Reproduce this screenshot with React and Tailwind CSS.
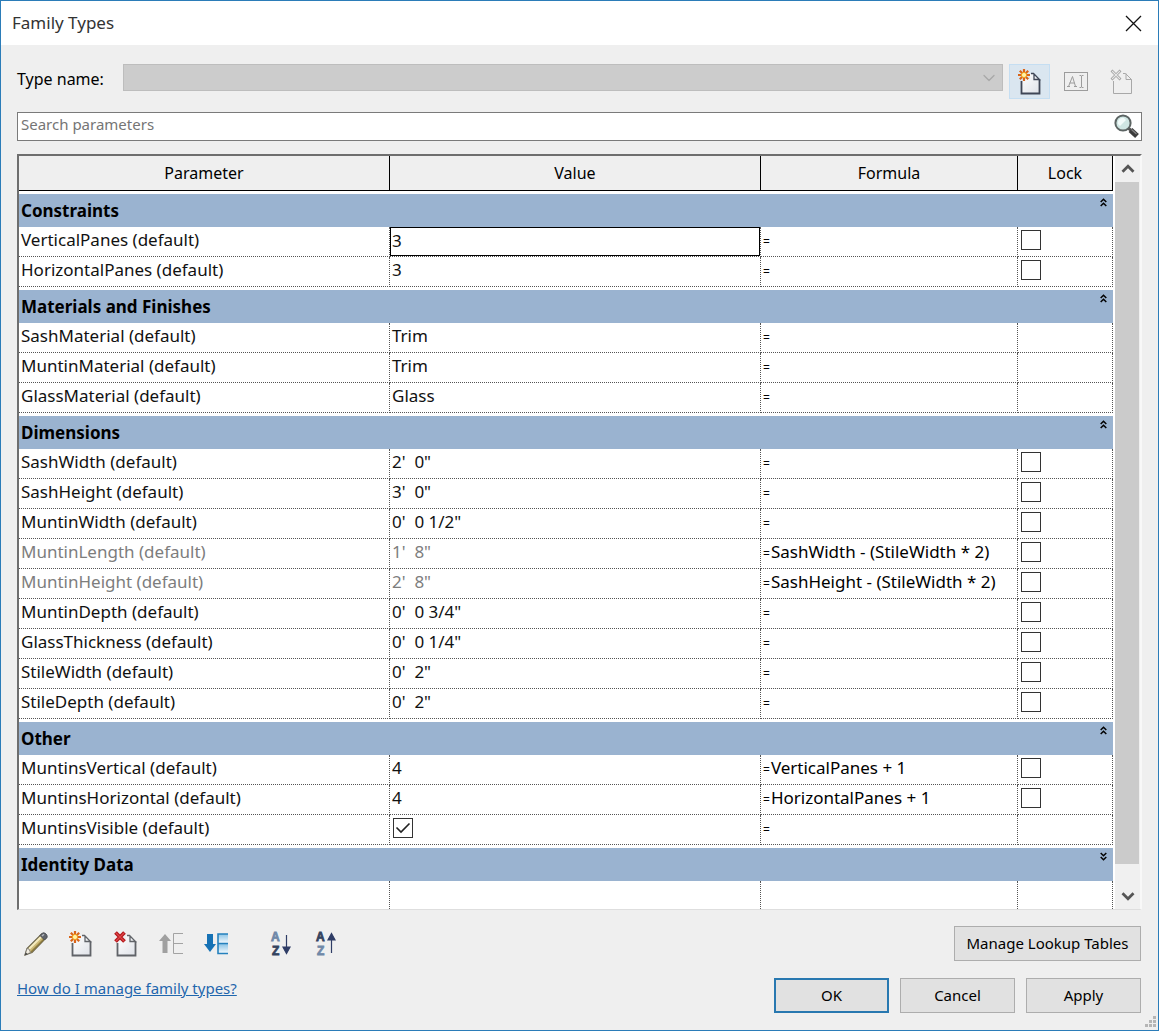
import { useState } from 'react'
import { ChevronDown, ChevronUp } from 'lucide-react'

const GROUPS = [
  {
    title: 'Constraints',
    open: true,
    rows: [
      { name: 'VerticalPanes', value: '3', lock: true, editing: true },
      { name: 'HorizontalPanes', value: '3', lock: true },
    ],
  },
  {
    title: 'Materials and Finishes',
    open: true,
    rows: [
      { name: 'SashMaterial', value: 'Trim' },
      { name: 'MuntinMaterial', value: 'Trim' },
      { name: 'GlassMaterial', value: 'Glass' },
    ],
  },
  {
    title: 'Dimensions',
    open: true,
    rows: [
      { name: 'SashWidth', value: '2\'  0"', lock: true },
      { name: 'SashHeight', value: '3\'  0"', lock: true },
      { name: 'MuntinWidth', value: '0\'  0 1/2"', lock: true },
      { name: 'MuntinLength', value: '1\'  8"', formula: 'SashWidth - (StileWidth * 2)', lock: true, derived: true },
      { name: 'MuntinHeight', value: '2\'  8"', formula: 'SashHeight - (StileWidth * 2)', lock: true, derived: true },
      { name: 'MuntinDepth', value: '0\'  0 3/4"', lock: true },
      { name: 'GlassThickness', value: '0\'  0 1/4"', lock: true },
      { name: 'StileWidth', value: '0\'  2"', lock: true },
      { name: 'StileDepth', value: '0\'  2"', lock: true },
    ],
  },
  {
    title: 'Other',
    open: true,
    rows: [
      { name: 'MuntinsVertical', value: '4', formula: 'VerticalPanes + 1', lock: true },
      { name: 'MuntinsHorizontal', value: '4', formula: 'HorizontalPanes + 1', lock: true },
      { name: 'MuntinsVisible', value: true },
    ],
  },
  { title: 'Identity Data', open: false, rows: [] },
]

const CELL = 'h-[30px] border-r border-b border-dotted border-[#555] p-0 text-[17px] leading-6'

export default function App() {
  return (
    <div className="relative flex min-h-screen flex-col border border-[#2b7cb8] bg-[#efefef] font-['Noto_Sans','Open_Sans',sans-serif] text-[15px] text-black">
      <header className="flex h-11 items-center justify-between bg-white pr-4 pl-[11px]">
        <h1 className="text-[17px] text-[#333]">Family Types</h1>
        <button type="button" aria-label="Close">
          <svg width="17" height="17" viewBox="0 0 17 17" stroke="#111" strokeWidth="1.3">
            <path d="M1 1L16 16M16 1L1 16" />
          </svg>
        </button>
      </header>

      <main className="flex flex-1 flex-col px-4 pt-[19px] pb-[17px]">
        <TypeBar />
        <div className="mt-[13px] flex h-[29px] items-center border border-[#7a7a7a] bg-white">
          <input
            type="text"
            aria-label="Search parameters"
            placeholder="Search parameters"
            className="h-full min-w-0 flex-1 pb-1.5 pl-[3px] outline-none placeholder:text-[#757575]"
          />
          <button type="button" aria-label="Search" className="mr-0.5">
            <SearchIcon />
          </button>
        </div>

        <div className="mt-[13px] flex flex-1 border-t-2 border-r-2 border-b border-l-2 border-t-[#6e6e6e] border-r-[#f8f8f8] border-b-[#dedede] border-l-[#6e6e6e] bg-white">
          <ParameterTable />
          <ScrollBar />
        </div>

        <div className="mt-4 flex items-center justify-between pr-px">
          <div className="flex items-center pl-px">
            <ToolButton label="Edit parameter"><PencilIcon /></ToolButton>
            <ToolButton label="New parameter"><PageIcon mark="new" /></ToolButton>
            <ToolButton label="Delete parameter"><PageIcon mark="delete" /></ToolButton>
            <ToolButton label="Move up" disabled><MoveIcon up /></ToolButton>
            <ToolButton label="Move down"><MoveIcon /></ToolButton>
            <div className="w-5" />
            <ToolButton label="Sort ascending"><SortIcon /></ToolButton>
            <ToolButton label="Sort descending"><SortIcon up /></ToolButton>
          </div>
          <button type="button" className="h-[35px] w-[187px] border border-[#adadad] bg-[#e1e1e1]">
            Manage Lookup Tables
          </button>
        </div>

        <div className="mt-[17px] flex items-start justify-between pr-px">
          <a href="#help" className="leading-5 text-[#1f66ad] underline">How do I manage family types?</a>
          <div className="flex gap-[11px]">
            <button type="button" className="h-[35px] w-[115px] border-2 border-[#2878b0] bg-[#e1e1e1]">OK</button>
            <button type="button" className="h-[35px] w-[115px] border border-[#adadad] bg-[#e1e1e1]">Cancel</button>
            <button type="button" className="h-[35px] w-[115px] border border-[#adadad] bg-[#e1e1e1]">Apply</button>
          </div>
        </div>
      </main>
      <ResizeGrip />
    </div>
  )
}

function TypeBar() {
  return (
    <div className="flex items-start">
      <label htmlFor="type-name" className="w-[106px] pt-[3px] text-base">Type name:</label>
      <div className="relative flex-1">
        <select id="type-name" disabled className="block h-[27px] w-full appearance-none border border-[#bdbdbd] bg-[#cccccc]" />
        <ChevronDown size={20} strokeWidth={1.5} className="pointer-events-none absolute top-1 right-1 text-[#a8a8a8]" />
      </div>
      <div className="ml-1.5 flex gap-[5px]">
        <button type="button" aria-label="New type" className="flex h-[35px] w-[41px] items-center justify-center border border-[#c5def2] bg-[#dae6f0]">
          <PageIcon mark="new" dark />
        </button>
        <button type="button" aria-label="Rename type" disabled className="flex h-[35px] w-[41px] items-center justify-center">
          <RenameIcon />
        </button>
        <button type="button" aria-label="Delete type" disabled className="flex h-[35px] w-[41px] items-center justify-center">
          <PageIcon mark="delete" disabled />
        </button>
      </div>
    </div>
  )
}

function ParameterTable() {
  return (
    <table className="w-full table-fixed border-separate border-spacing-0 self-start">
      <colgroup>
        <col />
        <col />
        <col className="w-[257px]" />
        <col className="w-[95px]" />
      </colgroup>
      <thead>
        <tr>
          {['Parameter', 'Value', 'Formula', 'Lock'].map((h) => (
            <th key={h} scope="col" className="h-[35px] border-r border-b border-black bg-[#efefef] p-0 text-base font-normal">
              {h}
            </th>
          ))}
        </tr>
      </thead>
      {GROUPS.map((g) => <Group key={g.title} group={g} />)}
      <tbody>
        <tr>
          {[0, 1, 2, 3].map((i) => (
            <td key={i} className="h-7 border-r border-dotted border-[#555] p-0" />
          ))}
        </tr>
      </tbody>
    </table>
  )
}

function Group({ group }) {
  const [open, setOpen] = useState(group.open)
  return (
    <tbody>
      <tr>
        <th colSpan={4} scope="colgroup" className="h-9 border-t-[3px] border-white bg-[#9ab3d0] p-0 text-left">
          <div className="flex h-[33px] items-center justify-between pr-1.5 pl-0.5">
            <span className="text-[17px] font-bold">{group.title}</span>
            <button type="button" aria-label={`Toggle ${group.title}`} onClick={() => setOpen(!open)} className="mt-1 self-start">
              <DoubleChevron up={open} />
            </button>
          </div>
        </th>
      </tr>
      {open && group.rows.map((r) => <Row key={r.name} row={r} />)}
    </tbody>
  )
}

function Row({ row }) {
  const tone = row.derived ? 'text-[#7d7d7d]' : 'text-[#111]'
  return (
    <tr>
      <td className={`${CELL} pb-[3px] pl-0.5 ${tone}`}>{row.name} (default)</td>
      <td className={`${CELL} ${row.editing ? '' : 'pb-[3px]'} ${tone}`}>
        {row.editing && (
          <input
            type="text"
            aria-label={row.name}
            defaultValue={row.value}
            className="block h-[29px] w-full border border-black bg-white pb-0.5 pl-px outline-none"
          />
        )}
        {row.value === true && <CheckBox label={row.name} checked />}
        {!row.editing && row.value !== true && <span className="pl-0.5 whitespace-pre">{row.value}</span>}
      </td>
      <td className={`${CELL} pb-[3px] pl-0.5`}>
        <span className="mr-px text-xs">=</span>
        {row.formula}
      </td>
      <td className={`${CELL} pb-[3px]`}>{row.lock && <CheckBox label={`Lock ${row.name}`} />}</td>
    </tr>
  )
}

function CheckBox({ label, checked = false }) {
  return (
    <span className="ml-[3px] grid size-5">
      <input
        type="checkbox"
        aria-label={label}
        defaultChecked={checked}
        className="peer col-start-1 row-start-1 size-5 appearance-none border border-[#333] bg-white"
      />
      <svg viewBox="0 0 20 20" className="pointer-events-none invisible col-start-1 row-start-1 size-5 peer-checked:visible" fill="none" stroke="#222" strokeWidth="1.6">
        <path d="M3.5 9.5l4.5 4.5 8.5-8.5" />
      </svg>
    </span>
  )
}

function ScrollBar() {
  return (
    <div className="ml-0.5 flex w-[25px] shrink-0 flex-col bg-[#f0f0f0]">
      <button type="button" aria-label="Scroll up" className="flex h-[26px] items-center justify-center text-[#555]">
        <ChevronUp size={22} strokeWidth={3} strokeLinecap="butt" strokeLinejoin="miter" />
      </button>
      <div className="mb-[19px] w-6 flex-1 bg-[#cbcbcb]" />
      <button type="button" aria-label="Scroll down" className="flex h-[26px] items-center justify-center text-[#555]">
        <ChevronDown size={22} strokeWidth={3} strokeLinecap="butt" strokeLinejoin="miter" />
      </button>
    </div>
  )
}

function ToolButton({ label, disabled, children }) {
  return (
    <button type="button" aria-label={label} disabled={disabled} className="mr-[9px] flex h-8 w-9 items-center justify-center">
      {children}
    </button>
  )
}

function DoubleChevron({ up }) {
  return (
    <svg width="7" height="9" viewBox="0 0 7 9" fill="none" stroke="#000" strokeWidth="1.5">
      <path d={up ? 'M.7 4L3.5 1.2 6.3 4M.7 8L3.5 5.2 6.3 8' : 'M.7 1L3.5 3.8 6.3 1M.7 5L3.5 7.8 6.3 5'} />
    </svg>
  )
}

function PageIcon({ mark, dark, disabled }) {
  const line = disabled ? '#a8a8a8' : dark ? '#3f4656' : '#606368'
  return (
    <svg width="24" height="26" viewBox="0 0 24 26" fill="none">
      <defs>
        <linearGradient id="page-fill" x1="0" y1="0" x2="1" y2="1">
          <stop offset="0" stopColor="#fff" />
          <stop offset="1" stopColor="#dfe2e8" />
        </linearGradient>
      </defs>
      <path d="M3.5 12V24H21.5V11L15 5H12V10H8Z" fill={disabled ? 'none' : 'url(#page-fill)'} />
      <path d="M3.5 12V24.5H21.5V10.5" stroke={line} strokeWidth={disabled ? 1 : 1.8} />
      <path d="M13 4.5H15.5L21.5 10.5H16V4.5" stroke={line} strokeWidth={disabled ? 1 : 1.3} />
      {mark === 'new' && (
        <g>
          <path d="M6 0V12M0 6H12M1.8 1.8L10.2 10.2M10.2 1.8L1.8 10.2" stroke="#d9651a" strokeWidth="2.2" />
          <circle cx="6" cy="6" r="2.6" fill="#fff3a8" stroke="#f2a01e" />
        </g>
      )}
      {mark === 'delete' && (
        <g>
          <path d="M1.5 1.5L10.5 10.5M10.5 1.5L1.5 10.5" stroke={disabled ? '#9a9a9a' : '#b3161b'} strokeWidth={disabled ? 2.6 : 3.8} />
          <path d="M2 2L10 10M10 2L2 10" stroke={disabled ? '#e6e6e6' : '#e0484a'} strokeWidth="1.2" />
        </g>
      )}
    </svg>
  )
}

function RenameIcon() {
  return (
    <svg width="24" height="20" viewBox="0 0 24 20" fill="none" stroke="#9c9c9c">
      <rect x=".5" y=".5" width="23" height="18" />
      <path d="M4.5 14.5L8.5 4.5L11.5 14.5M5.5 11H10.5M3 14.5H6M10 14.5H13" />
      <path d="M15.5 3.5H17L17.5 4L18 3.5H19.5M17.5 4V15M15.5 15.5H17L17.5 15L18 15.5H19.5" />
    </svg>
  )
}

function SearchIcon() {
  return (
    <svg width="25" height="25" viewBox="0 0 25 25">
      <path d="M14 14L18 17" stroke="#555" strokeWidth="3" />
      <path d="M16.5 16L23 22" stroke="#3c3c3c" strokeWidth="5.5" />
      <path d="M17.5 15.5L22.5 20" stroke="#858585" strokeWidth="1.2" />
      <circle cx="9" cy="9" r="7.6" fill="#cfe6e3" stroke="#5c6463" strokeWidth="2" />
      <path d="M4 10A5 5 0 0 1 10 4L12 6L6 12Z" fill="#f2fbfa" />
    </svg>
  )
}

function PencilIcon() {
  return (
    <svg width="24" height="24" viewBox="0 0 24 24">
      <path d="M1 23L3 16.5L17.5 2L22 6L8 20.5Z" fill="#cdbb78" stroke="#6b654d" strokeWidth="1.2" />
      <path d="M5 17L18 4" stroke="#f5ecc0" strokeWidth="1.8" />
      <path d="M7 20L20 7" stroke="#8f7d3e" strokeWidth="1.5" />
      <path d="M16 3.5L18.5 1Q20 .3 22 2Q23.8 4 23 5.5L20.5 8Z" fill="#60646c" stroke="#4b4e55" />
      <path d="M18 4L20 2.3" stroke="#b4b8bf" strokeWidth="1.5" />
      <path d="M1 23L3 16.5L5 17L6.5 20.5Z" fill="#f3eee2" stroke="#77756e" strokeWidth=".8" />
      <path d="M1 23L1.8 20.5L3.5 22.2Z" fill="#333" />
    </svg>
  )
}

function MoveIcon({ up }) {
  if (up) {
    return (
      <svg width="26" height="24" viewBox="0 0 26 24">
        <path d="M7 2L13 9H9.5V21H4.5V9H1Z" fill="#a0a0a0" />
        <path d="M25 1.5H15.5V21.5H25M15.5 11.5H25" fill="none" stroke="#a3a3a3" />
      </svg>
    )
  }
  return (
    <svg width="26" height="24" viewBox="0 0 26 24">
      <defs>
        <linearGradient id="bars" x1="0" y1="0" x2="0" y2="1">
          <stop offset="0" stopColor="#8cc4e6" />
          <stop offset="1" stopColor="#f0f8fd" />
        </linearGradient>
      </defs>
      <path d="M4 2H10V12H13L7 20L1 12H4Z" fill="#1672b5" />
      <path d="M15 2H25V11H15Z" fill="url(#bars)" />
      <path d="M15 12H25V21H15Z" fill="url(#bars)" />
      <path d="M25 2H15V21.5H25M15 11.5H25" fill="none" stroke="#2581bd" strokeWidth="1.6" />
    </svg>
  )
}

function SortIcon({ up }) {
  const top = up ? '#34435f' : '#7088a8'
  const bottom = up ? '#7088a8' : '#34435f'
  return (
    <svg width="24" height="30" viewBox="-1 -3 24 30" fontFamily="Liberation Sans, sans-serif" fontWeight="700" fontSize="12" strokeWidth=".8">
      <text x="1" y="9" fill={top} stroke={top}>A</text>
      <text x="2" y="23" fill={bottom} stroke={bottom}>Z</text>
      {up ? (
        <path d="M16.5 21V5M16.5 1.5L13 8H20Z" stroke="#2f3d66" strokeWidth="1.2" fill="#2f3d66" />
      ) : (
        <path d="M16.5 3V18M16.5 21.5L13 15H20Z" stroke="#2f3d66" strokeWidth="1.2" fill="#2f3d66" />
      )}
    </svg>
  )
}

function ResizeGrip() {
  return (
    <svg width="12" height="12" viewBox="0 0 12 12" fill="#b5b5b5" className="absolute right-0.5 bottom-0.5">
      <path d="M9 0h3v3H9zM5 4h3v3H5zM9 4h3v3H9zM1 8h3v3H1zM5 8h3v3H5zM9 8h3v3H9z" />
    </svg>
  )
}
